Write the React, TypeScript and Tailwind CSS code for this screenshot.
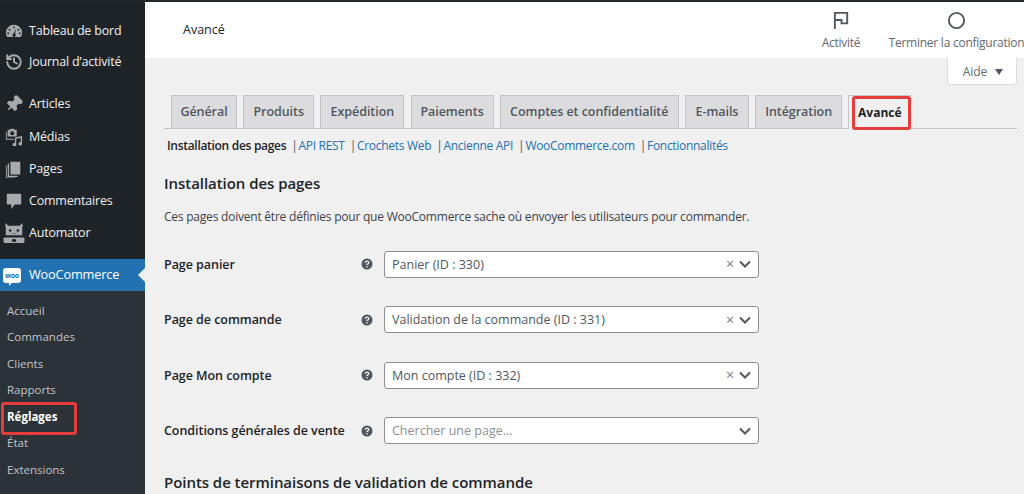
import { History, Pin } from 'lucide-react';
import type { ReactNode } from 'react';

const ICON = 'h-[18px] w-[18px] fill-[#a7aaad]';

function GaugeIcon() {
  return (
    <svg viewBox="0 0 20 20" className={ICON}>
      <path fillRule="evenodd" d="M10 3a9 9 0 0 0-9 9c0 1.800.500 3.400 1.400 4.800h15.200A9 9 0 0 0 19 12a9 9 0 0 0-9-9zM10 5a1 1 0 1 1 0 2 1 1 0 0 1 0-2zM5 7.500a1 1 0 1 1 0 2 1 1 0 0 1 0-2zM15 7.500a1 1 0 1 1 0 2 1 1 0 0 1 0-2zM3.500 11.500a1 1 0 1 1 0 2 1 1 0 0 1 0-2zM16.500 11.500a1 1 0 1 1 0 2 1 1 0 0 1 0-2zM12.500 7.500l-1.300 5.600a1.800 1.800 0 1 1-1.500-.3z" />
    </svg>
  );
}

function MediaIcon() {
  return (
    <svg viewBox="0 0 20 20" className={ICON}>
      <path fillRule="evenodd" d="M3 2h2.500l1-1.200h3l1 1.200H13v7.500H3zM8 3.500a2.300 2.300 0 1 0 0 4.600 2.300 2.300 0 0 0 0-4.600z" />
      <path d="M1 4.500h1V12h8v1H1zM19 9v8.500a2 2 0 1 1-1.500-1.900V11l-5 1v6.500a2 2 0 1 1-1.500-1.900V10.500z" />
    </svg>
  );
}

function PagesIcon() {
  return (
    <svg viewBox="0 0 20 20" className={ICON}>
      <path d="M6 2h11v14H6zM4.500 4v13.500H14V19H3V4zM2 6v13.500h9V20H1V6z" />
    </svg>
  );
}

function CommentIcon() {
  return (
    <svg viewBox="0 0 20 20" className={ICON}>
      <path d="M3 2h14a1 1 0 0 1 1 1v10a1 1 0 0 1-1 1h-6l-4 5v-5H3a1 1 0 0 1-1-1V3a1 1 0 0 1 1-1z" />
    </svg>
  );
}

function RobotIcon() {
  return (
    <svg viewBox="0 0 20 20" className="h-[22px] w-[22px] fill-[#a7aaad]">
      <path fillRule="evenodd" d="M2 1l3 2.500h10L18 1l-.5 4.500V12h-15V5.500zM6.500 6.500a1.200 1.200 0 1 0 0 2.400 1.200 1.200 0 0 0 0-2.400zM13.500 6.500a1.200 1.200 0 1 0 0 2.400 1.200 1.200 0 0 0 0-2.400zM6.500 9.500q3.500 2 7 0-3.500 1-7 0z" />
      <path fillRule="evenodd" d="M1.500 14h17a1 1 0 0 1 1 1v3a1 1 0 0 1-1 1h-17a1 1 0 0 1-1-1v-3a1 1 0 0 1 1-1zM8 18h4v-1.500l-1-1H9l-1 1z" />
    </svg>
  );
}

function HelpIcon() {
  return (
    <svg viewBox="0 0 12 12" className="h-3 w-3">
      <circle cx="6" cy="6" r="5.500" fill="#50575e" />
      <path d="M4.300 4.700c0-2.200 3.500-2.200 3.500-.1 0 1.300-1.800 1.300-1.800 2.500" fill="none" stroke="#f0f0f1" strokeWidth="1.300" />
      <rect x="5.300" y="8" width="1.400" height="1.400" fill="#f0f0f1" />
    </svg>
  );
}

function Chevron() {
  return (
    <svg viewBox="0 0 12 8" className="h-2 w-3 fill-none stroke-[#50575e] stroke-2">
      <path d="M1 1.500l5 5 5-5" />
    </svg>
  );
}

const MENU: { label: string; icon: ReactNode; margin: string }[] = [
  { label: 'Tableau de bord', icon: <GaugeIcon />, margin: 'mt-[13px]' },
  { label: 'Journal d’activité', icon: <History className="h-[18px] w-[18px] text-[#a7aaad]" strokeWidth={2.6} />, margin: 'mt-[-1px]' },
  { label: 'Articles', icon: <Pin className="h-[18px] w-[18px] rotate-45 fill-[#a7aaad] text-[#a7aaad]" />, margin: 'mt-[10px]' },
  { label: 'Médias', icon: <MediaIcon />, margin: 'mt-[1px]' },
  { label: 'Pages', icon: <PagesIcon />, margin: 'mt-0' },
  { label: 'Commentaires', icon: <CommentIcon />, margin: 'mt-0' },
  { label: 'Automator', icon: <RobotIcon />, margin: 'mt-0' },
];

const SUBMENU = ['Accueil', 'Commandes', 'Clients', 'Rapports', 'Réglages', 'État', 'Extensions'];

const TABS = [
  { label: 'Général', width: 'w-[66px]' },
  { label: 'Produits', width: 'w-[71px]' },
  { label: 'Expédition', width: 'w-[84px]' },
  { label: 'Paiements', width: 'w-[83px]' },
  { label: 'Comptes et confidentialité', width: 'w-[179px]' },
  { label: 'E-mails', width: 'w-[64px]' },
  { label: 'Intégration', width: 'w-[87px]' },
];

const LINKS = ['API REST', 'Crochets Web', 'Ancienne API', 'WooCommerce.com', 'Fonctionnalités'];

const ROWS = [
  { label: 'Page panier', value: 'Panier (ID : 330)' },
  { label: 'Page de commande', value: 'Validation de la commande (ID : 331)' },
  { label: 'Page Mon compte', value: 'Mon compte (ID : 332)' },
  { label: 'Conditions générales de vente', value: '' },
];

export default function App() {
  return (
    <div className="flex h-[494px] w-[1024px] flex-col overflow-hidden bg-[#f0f0f1] font-['Open_Sans','Liberation_Sans',sans-serif] text-[13px] text-[#3c434a]">
      <div className="h-[2px] shrink-0 bg-[#23282d]" />
      <div className="flex min-h-0 flex-1">
        {/* sidebar */}
        <aside className="flex w-[145px] shrink-0 flex-col bg-[#1d2327]">
          {MENU.map((m) => (
            <div key={m.label} className={`flex h-8 items-center text-[#f0f0f1] ${m.margin}`}>
              <span className="flex w-[26px] shrink-0 justify-center pl-[2px]">{m.icon}</span>
              <span className="ml-[3px] text-[12.5px] tracking-[-0.2px]">{m.label}</span>
            </div>
          ))}
          <div className="relative mt-[10px] flex h-[32px] items-center bg-[#2271b1] text-white">
            <span className="relative ml-[3px] flex h-[15px] w-[18px] items-center justify-center rounded-[3px] bg-white text-[7px] font-bold leading-none tracking-[-0.3px] text-[#2271b1]">
              woo
              <span className="absolute bottom-[-3px] left-[6px] h-0 w-0 border-r-[3px] border-t-[3px] border-r-transparent border-t-white" />
            </span>
            <span className="ml-[8px] text-[12.8px] tracking-[-0.2px]">WooCommerce</span>
            <span className="absolute right-0 top-[9px] h-0 w-0 border-y-[7px] border-r-[7px] border-y-transparent border-r-[#f0f0f1]" />
          </div>
          <div className="flex flex-1 flex-col bg-[#2c3338] pt-[6px] text-[11.5px] text-[#c3c4c7]">
            {SUBMENU.map((s) => (
              <div key={s} className="relative flex h-[26.5px] shrink-0 items-center pl-[7px]">
                {s === 'Réglages' ? (
                  <>
                    <span className="font-bold text-white">{s}</span>
                    <span className="absolute left-[1px] top-[-1px] h-[33px] w-[76px] rounded-[3px] border-[3px] border-[#e53c3c]" />
                  </>
                ) : (
                  s
                )}
              </div>
            ))}
          </div>
        </aside>

        {/* main */}
        <main className="flex min-w-0 flex-1 flex-col">
          <header className="flex h-[56px] shrink-0 items-center justify-between bg-white">
            <span className="ml-[38px] text-[12.5px] font-medium text-[#1d2327]">Avancé</span>
            <div className="flex pt-[3px] text-[12px] tracking-[-0.25px] text-[#646970]">
              <div className="flex w-[68px] flex-col items-center">
                <svg viewBox="0 0 20 20" className="h-[19px] w-[19px] fill-none stroke-[#50575e] stroke-2">
                  <path d="M3 19V2h13v11h-6V9.500H3" />
                </svg>
                <span className="mt-[4px] whitespace-nowrap">Activité</span>
              </div>
              <div className="ml-[14px] flex w-[135px] flex-col items-center">
                <svg viewBox="0 0 20 20" className="h-[19px] w-[19px] fill-none stroke-[#50575e] stroke-2">
                  <circle cx="10" cy="10" r="8" />
                </svg>
                <span className="mt-[4px] whitespace-nowrap">Terminer la configuration</span>
              </div>
            </div>
          </header>

          <div className="flex justify-end pr-[7px]">
            <div className="flex h-[27px] w-[70px] items-center justify-center gap-2 rounded-b-[3px] border border-t-0 border-[#dcdcde] bg-white pl-[2px] pt-[2px] text-[12px] text-[#646970]">
              Aide
              <span className="h-0 w-0 border-x-[4px] border-t-[6px] border-x-transparent border-t-[#50575e]" />
            </div>
          </div>

          <div className="ml-[19px] mr-[7px] mt-[10px] flex h-[34px] items-stretch gap-[6.200px] border-b border-[#c3c4c7] pl-[7px]">
            {TABS.map((t) => (
              <div key={t.label} className={`flex shrink-0 items-center justify-center border border-b-0 border-[#c3c4c7] bg-[#dcdcde] pt-[2px] text-[12.5px] font-semibold tracking-[-0.05px] text-[#50575e] ${t.width}`}>
                {t.label}
              </div>
            ))}
            <div className="relative -mb-px flex w-[63px] shrink-0 items-center justify-center border border-b-0 border-[#c3c4c7] bg-[#f0f0f1] pt-[2px] text-[12px] font-bold text-[#1d2327]">
              Avancé
              <span className="absolute bottom-[-1px] left-[3px] top-0 w-[59px] rounded-[3px] border-[3px] border-[#e53c3c]" />
            </div>
          </div>

          <div className="ml-[22px] mt-[8px] flex h-[18px] items-center text-[12px] tracking-[-0.3px]">
            <span className="font-semibold text-[#1d2327]">Installation des pages</span>
            {LINKS.map((l) => (
              <span key={l} className="whitespace-nowrap">
                <span className="ml-[5px] mr-[1px] text-[#50575e]">|</span>
                <span className="text-[#2271b1]">{l}</span>
              </span>
            ))}
          </div>

          <h2 className="ml-[19px] mt-[16px] text-[15px] font-semibold leading-[24px] tracking-[-0.05px] text-[#1d2327]">Installation des pages</h2>
          <p className="ml-[19px] mt-[13px] text-[12px] leading-[18px] tracking-[-0.22px]">
            Ces pages doivent être définies pour que WooCommerce sache où envoyer les utilisateurs pour commander.
          </p>

          <div className="ml-[19px] mt-[25px] flex flex-col gap-[28.500px]">
            {ROWS.map((r) => (
              <div key={r.label} className="flex h-[27px] items-center">
                <span className="w-[197px] shrink-0 whitespace-nowrap pt-[2px] text-[12.5px] font-semibold tracking-[-0.05px] text-[#1d2327]">{r.label}</span>
                <HelpIcon />
                <div className="ml-[11px] flex h-[27px] w-[375px] items-center rounded-[3px] border border-[#8c8f94] bg-white pl-[7px] pr-[7px] text-[12.5px]">
                  <span className={`flex-1 pt-[2px] ${r.value ? 'text-[#50575e]' : 'text-[#8c8f94]'}`}>{r.value || 'Chercher une page...'}</span>
                  {r.value && <span className="mr-[5px] text-[14px] leading-none text-[#787c82]">×</span>}
                  <Chevron />
                </div>
              </div>
            ))}
          </div>

          <h2 className="ml-[19px] mt-[26px] whitespace-nowrap text-[15px] font-semibold leading-[24px] tracking-[-0.05px] text-[#1d2327]">
            Points de terminaisons de validation de commande
          </h2>
        </main>
      </div>
    </div>
  );
}
